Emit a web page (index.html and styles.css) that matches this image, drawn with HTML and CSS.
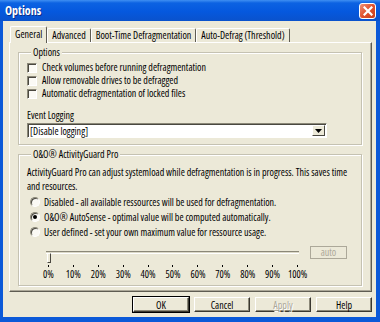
FILE: index.html
```html
<!DOCTYPE html>
<html lang="en">
<head>
    <meta charset="UTF-8">
    <meta name="viewport" content="width=device-width, initial-scale=1.0">
    <title>Options</title>
    <link rel="stylesheet" href="styles.css">
</head>
<body>

<div class="window">
    <div class="titlebar">
        <span class="title">Options</span>
        <span class="close">
            <svg width="10" height="10" viewBox="0 0 10 10">
                <path d="M1.5 1.5 L8.5 8.5 M8.5 1.5 L1.5 8.5" stroke="#fff" stroke-width="2.2" stroke-linecap="square"/>
            </svg>
        </span>
    </div>

    <div class="client">
        <div class="tabs">
            <div class="tab active">General</div>
            <div class="tab">Advanced</div>
            <div class="tab">Boot-Time Defragmentation</div>
            <div class="tab">Auto-Defrag (Threshold)</div>
        </div>

        <div class="panel">
            <!-- Options group -->
            <fieldset class="group group-options">
                <legend>Options</legend>
                <label class="check"><span class="box"></span><span class="focus">Check volumes before running defragmentation</span></label>
                <label class="check"><span class="box"></span><span>Allow removable drives to be defragged</span></label>
                <label class="check"><span class="box"></span><span>Automatic defragmentation of locked files</span></label>

                <div class="field-label">Event Logging</div>
                <div class="combo">
                    <span class="combo-text">[Disable logging]</span>
                    <span class="drop">
                        <svg width="7" height="4" viewBox="0 0 7 4"><path d="M0 0 H7 L3.5 4 Z" fill="#000"/></svg>
                    </span>
                </div>
            </fieldset>

            <!-- ActivityGuard group -->
            <fieldset class="group group-guard">
                <legend>O&amp;O® ActivityGuard Pro</legend>
                <p class="desc">ActivityGuard Pro can adjust systemload while defragmentation is in progress. This saves time<br>and resources.</p>

                <label class="radio"><span class="dot"></span><span>Disabled - all available ressources will be used for defragmentation.</span></label>
                <label class="radio"><span class="dot checked"></span><span>O&amp;O® AutoSense - optimal value will be computed automatically.</span></label>
                <label class="radio"><span class="dot"></span><span>User defined - set your own maximum value for ressource usage.</span></label>

                <div class="slider-row">
                    <div class="slider">
                        <div class="track-area">
                            <div class="track"></div>
                            <span class="thumb"></span>
                        </div>
                        <div class="scale">
                            <span class="step"><i></i>0%</span>
                            <span class="step"><i></i>10%</span>
                            <span class="step"><i></i>20%</span>
                            <span class="step"><i></i>30%</span>
                            <span class="step"><i></i>40%</span>
                            <span class="step"><i></i>50%</span>
                            <span class="step"><i></i>60%</span>
                            <span class="step"><i></i>70%</span>
                            <span class="step"><i></i>80%</span>
                            <span class="step"><i></i>90%</span>
                            <span class="step"><i></i>100%</span>
                        </div>
                    </div>
                    <div class="auto">auto</div>
                </div>
            </fieldset>
        </div>

        <div class="buttons">
            <button class="btn default">OK</button>
            <button class="btn">Cancel</button>
            <button class="btn" disabled><u>A</u>pply</button>
            <button class="btn">Help</button>
        </div>
    </div>
</div>

</body>
</html>
```

FILE: styles.css
```css
* {
    box-sizing: border-box;
}

body {
    margin: 0;
    background-color: #ffffff;
    font-family: "Open Sans", "Liberation Sans", Arial, sans-serif;
    font-stretch: 77%;
    font-size: 10px;
    color: #000;
}

.window {
    width: 380px;
    height: 322px;
    display: flex;
    flex-direction: column;
    background-color: #0b59d8;
}

/* title bar */
.titlebar {
    height: 21px;
    display: flex;
    align-items: center;
    padding: 0 4px 0 5px;
    background: linear-gradient(#3f8ff2 0, #0c62e2 3px, #0558de 55%, #0a52cc 100%);
}

.title {
    color: #fff;
    font-weight: bold;
    font-size: 12px;
    font-stretch: 80%;
    text-shadow: 1px 1px 0 #0b2f8a;
}

.close {
    margin-left: auto;
    width: 17px;
    height: 16px;
    display: flex;
    align-items: center;
    justify-content: center;
    border: 1px solid #fff;
    border-radius: 3px;
    background: linear-gradient(135deg, #f09278, #e0522e 50%, #c8401c);
}

/* dialog client area */
.client {
    flex: 1;
    margin: 0 4px 5px 3px;
    padding: 0 4px 5px 6px;
    display: flex;
    flex-direction: column;
    background-color: #ece9d8;
}

.tabs {
    height: 16px;
    margin-top: 5px;
    display: flex;
    align-items: flex-end;
    position: relative;
    z-index: 1;
}

.tab {
    height: 14px;
    padding: 0 4px;
    line-height: 13px;
    white-space: nowrap;
    border-top: 1px solid #fff;
    border-left: 1px solid #fff;
    border-right: 1px solid #5e5c52;
    border-radius: 2px 2px 0 0;
    background-color: #ece9d8;
}

.tab.active {
    height: 17px;
    margin-bottom: -1px;
    margin-left: 1px;
    line-height: 15px;
}

.panel {
    height: 250px;
    display: flex;
    flex-direction: column;
    padding: 4px 9px 0 8px;
    border-top: 1px solid #fff;
    border-left: 1px solid #fff;
    border-right: 1px solid #5e5c52;
    border-bottom: 1px solid #5e5c52;
    box-shadow: inset -1px -1px 0 #aca899;
}

/* group boxes */
.group {
    min-width: 0;
    margin: 0;
    padding: 0 0 6px 8px;
    border: 1px solid #c5c2b2;
    box-shadow: 1px 1px 0 #fff, inset 1px 1px 0 #fff;
}

.group legend {
    padding: 0 2px;
    margin-left: 4px;
    line-height: 10px;
    background-color: #ece9d8;
}

.group-options {
    padding-top: 4px;
}

.group-guard {
    margin-top: 4px;
    padding-top: 6px;
}

.check {
    height: 13px;
    display: flex;
    align-items: center;
    gap: 3px;
}

.box {
    width: 10px;
    height: 10px;
    background-color: #fbfaf5;
    border-top: 1px solid #8b8878;
    border-left: 1px solid #8b8878;
    border-right: 1px solid #fff;
    border-bottom: 1px solid #fff;
    box-shadow: inset 1px 1px 0 #4a4840;
}

.check span:last-child {
    padding: 0 1px;
    line-height: 11px;
    border: 1px solid transparent;
}

.check .focus {
    border: 1px dotted #333;
}

.field-label {
    margin-top: 10px;
    line-height: 10px;
}

.combo {
    width: 300px;
    height: 15px;
    margin-top: 3px;
    display: flex;
    align-items: center;
    padding: 0 1px 0 2px;
    background-color: #fff;
    border-top: 1px solid #8b8878;
    border-left: 1px solid #8b8878;
    border-right: 1px solid #fff;
    border-bottom: 1px solid #fff;
    box-shadow: inset 1px 1px 0 #4a4840;
}

.combo-text {
    flex: 1;
}

.drop {
    width: 13px;
    height: 11px;
    display: flex;
    align-items: center;
    justify-content: center;
    background-color: #ece9d8;
    border-top: 1px solid #fff;
    border-left: 1px solid #fff;
    border-right: 1px solid #4a4840;
    border-bottom: 1px solid #4a4840;
}

.desc {
    margin: 0;
    line-height: 14px;
    white-space: nowrap;
}

.radio {
    height: 15px;
    display: flex;
    align-items: center;
    gap: 4px;
    padding-left: 3px;
}

.radio:first-of-type {
    margin-top: 1px;
}

.dot {
    width: 10px;
    height: 10px;
    border-radius: 50%;
    display: flex;
    align-items: center;
    justify-content: center;
    background-color: #fbfaf5;
    border: 1px solid;
    border-color: #8b8878 #fff #fff #8b8878;
    box-shadow: inset 1px 1px 0 #4a4840;
}

.dot.checked::after {
    content: "";
    width: 4px;
    height: 4px;
    border-radius: 50%;
    background-color: #000;
}

/* slider */
.slider-row {
    margin-top: 7px;
    margin-left: 9px;
    display: flex;
}

.slider {
    width: 274px;
}

.track-area {
    height: 13px;
    position: relative;
}

.track {
    margin: 5px 11px 0 10px;
    height: 3px;
    border-top: 1px solid #8b8878;
    border-bottom: 1px solid #fff;
    background-color: #dcd9c8;
}

.thumb {
    position: absolute;
    left: 11px;
    top: 2px;
    width: 4px;
    height: 10px;
    background-color: #ece9d8;
    border-top: 1px solid #fff;
    border-left: 1px solid #fff;
    border-right: 1px solid #4a4840;
    border-bottom: 1px solid #4a4840;
}

.scale {
    display: grid;
    grid-template-columns: repeat(11, 1fr);
}

.step {
    display: flex;
    flex-direction: column;
    align-items: center;
    line-height: 10px;
}

.step i {
    width: 1px;
    height: 2px;
    margin: 1px 0 2px;
    background-color: #000;
}

.auto {
    width: 37px;
    height: 13px;
    line-height: 11px;
    text-align: center;
    color: #aca899;
    border: 1px solid #aca899;
    background-color: #ece9d8;
}

/* bottom buttons */
.buttons {
    margin-top: 5px;
    display: flex;
    justify-content: flex-end;
    gap: 5px;
}

.btn {
    width: 56px;
    height: 15px;
    padding: 0;
    font-family: inherit;
    font-stretch: inherit;
    font-size: 10px;
    line-height: 12px;
    color: #000;
    background-color: #ece9d8;
    border-top: 1px solid #fff;
    border-left: 1px solid #fff;
    border-right: 1px solid #3a3830;
    border-bottom: 1px solid #3a3830;
    box-shadow: inset -1px -1px 0 #8b8878;
}

.btn.default {
    outline: 1px solid #000;
}

.btn:disabled {
    color: #aca899;
    text-shadow: 1px 1px 0 #fff;
}
```
